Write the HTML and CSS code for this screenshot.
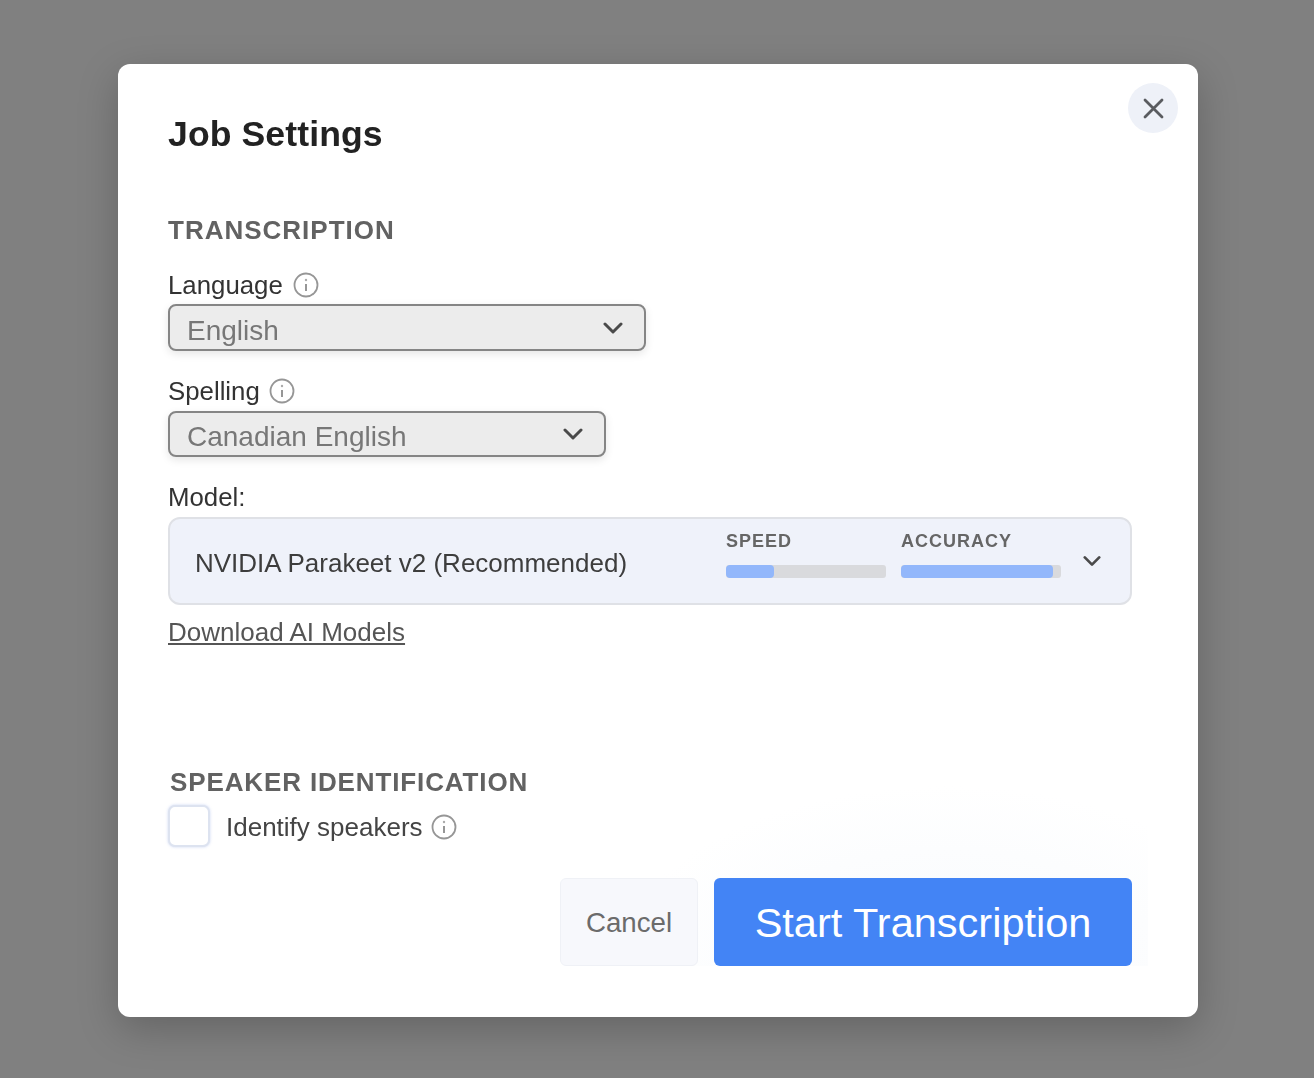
FILE: index.html
```html
<!DOCTYPE html>
<html lang="en">
<head>
<meta charset="utf-8">
<title>Job Settings</title>
<link rel="stylesheet" href="styles.css">
</head>
<body>
<div class="modal">
  <button class="close" aria-label="Close">
    <svg width="24" height="24" viewBox="-1 -1 24 24" fill="none" stroke="#5a5c60" stroke-width="2.8" stroke-linecap="round"><path d="M3 3 20 20M20 3 3 20"/></svg>
  </button>
  <h1 class="title">Job Settings</h1>
  <h2 class="section">TRANSCRIPTION</h2>
  <div class="label">Language
    <svg class="info" viewBox="0 0 26 26" fill="none" stroke="#969696"><circle cx="13" cy="13" r="11.5" stroke-width="1.8"/><path d="M13 12v7" stroke-width="2"/><circle cx="13" cy="8" r="1.2" fill="#aaa" stroke="none"/></svg>
  </div>
  <div class="select lang"><span class="select-value">English</span>
    <svg class="chev" viewBox="0 0 20 12" fill="none" stroke="#4a4a4a" stroke-width="3" stroke-linecap="round" stroke-linejoin="round"><path d="M2 2 10 10 18 2"/></svg>
  </div>
  <div class="label spelling">Spelling
    <svg class="info" viewBox="0 0 26 26" fill="none" stroke="#969696"><circle cx="13" cy="13" r="11.5" stroke-width="1.8"/><path d="M13 12v7" stroke-width="2"/><circle cx="13" cy="8" r="1.2" fill="#aaa" stroke="none"/></svg>
  </div>
  <div class="select spell"><span class="select-value">Canadian English</span>
    <svg class="chev" viewBox="0 0 20 12" fill="none" stroke="#4a4a4a" stroke-width="3" stroke-linecap="round" stroke-linejoin="round"><path d="M2 2 10 10 18 2"/></svg>
  </div>
  <div class="label model-label">Model:</div>
  <div class="model">
    <span class="model-name">NVIDIA Parakeet v2 (Recommended)</span>
    <div class="metric speed">
      <span class="metric-name">SPEED</span>
      <div class="track"><div class="fill" style="width:30%"></div></div>
    </div>
    <div class="metric">
      <span class="metric-name">ACCURACY</span>
      <div class="track"><div class="fill" style="width:95%"></div></div>
    </div>
    <svg class="chev model-chev" viewBox="0 0 20 12" fill="none" stroke="#4a4a4a" stroke-width="3" stroke-linecap="round" stroke-linejoin="round"><path d="M2 2 10 10 18 2"/></svg>
  </div>
  <a class="download" href="#">Download AI Models</a>
  <h2 class="section speaker">SPEAKER IDENTIFICATION</h2>
  <div class="identify">
    <span class="checkbox"></span>
    <span class="identify-text">Identify speakers</span>
    <svg class="info" viewBox="0 0 26 26" fill="none" stroke="#969696"><circle cx="13" cy="13" r="11.5" stroke-width="1.8"/><path d="M13 12v7" stroke-width="2"/><circle cx="13" cy="8" r="1.2" fill="#aaa" stroke="none"/></svg>
  </div>
  <div class="actions">
    <button class="cancel">Cancel</button>
    <button class="start">Start Transcription</button>
  </div>
</div>
</body>
</html>
```
FILE: styles.css
```css
* { box-sizing: border-box; }
html, body { margin: 0; height: 100%; }
body {
  background: #808080;
  padding: 64px 116px 0 118px;
  font-family: "Liberation Sans", Arial, sans-serif;
  overflow: hidden;
}
.modal {
  position: relative;
  width: 1080px;
  height: 953px;
  background: #fff;
  border-radius: 12px;
  padding: 50px 66px 0 50px;
  box-shadow: 0 12px 40px rgba(0, 0, 0, 0.22);
  filter: blur(0.45px);
}
.close {
  position: absolute;
  top: 19px;
  right: 20px;
  width: 50px;
  height: 50px;
  border: 0;
  border-radius: 50%;
  background: #eef1f8;
  display: flex;
  align-items: center;
  justify-content: center;
  padding: 0;
}
.title {
  margin: 0;
  font-size: 35.6px;
  line-height: 40px;
  font-weight: 700;
  color: #222;
  letter-spacing: 0.1px;
}
.section {
  margin: 60px 0 0;
  font-size: 26px;
  line-height: 32px;
  font-weight: 700;
  letter-spacing: 1px;
  color: #626262;
}
.label {
  display: flex;
  align-items: center;
  gap: 10px;
  margin-top: 23px;
  height: 32px;
  font-size: 25.8px;
  color: #333;
}
.label.spelling { margin-top: 24px; gap: 9px; }
.label.model-label { margin-top: 24px; gap: 0; }
.info { width: 26px; height: 26px; flex: none; }
.select {
  margin-top: 3px;
  height: 47px;
  display: flex;
  align-items: center;
  justify-content: space-between;
  background: #ececec;
  border: 2px solid #858585;
  border-radius: 8px;
  padding: 0 21px 0 17px;
  font-size: 28px;
  color: #777;
  box-shadow: 0 3px 8px rgba(0, 0, 0, 0.1);
}
.select-value { padding-top: 6px; }
.select.lang { width: 478px; }
.select.spell { width: 438px; height: 46px; margin-top: 4px; }
.chev { width: 20px; height: 12px; flex: none; }
.model {
  margin-top: 4px;
  height: 88px;
  display: flex;
  align-items: center;
  background: #eff2fa;
  border: 2px solid #dfe1e6;
  border-radius: 12px;
  padding: 0 27px 0 25px;
}
.model-name {
  width: 531px;
  padding-top: 4px;
  font-size: 26px;
  color: #3d3d3d;
}
.metric {
  width: 160px;
  display: flex;
  flex-direction: column;
}
.metric.speed { margin-right: 15px; }
.metric-name {
  font-size: 18px;
  line-height: 22px;
  font-weight: 700;
  letter-spacing: 1px;
  color: #666;
  margin-bottom: 13px;
}
.track {
  height: 13px;
  background: #d9dadd;
  border-radius: 3px;
  overflow: hidden;
  margin-bottom: 14px;
}
.fill {
  height: 100%;
  background: #92b7fb;
  border-radius: 4px;
}
.model-chev { margin-left: 22px; width: 18px; }
.download {
  display: block;
  width: max-content;
  margin-top: 11px;
  font-size: 26px;
  line-height: 32px;
  color: #555;
  text-decoration: underline;
}
.section.speaker { margin: 118px 0 0 2px; letter-spacing: 0.87px; }
.identify {
  display: flex;
  align-items: center;
  height: 42px;
  margin-top: 8px;
  font-size: 26px;
  color: #444;
}
.checkbox {
  width: 42px;
  height: 42px;
  margin: -3px 16px 0 0;
  background: #fff;
  border: 2px solid #dde3f0;
  border-radius: 7px;
  box-shadow: 0 0 3px rgba(110, 140, 220, 0.35);
}
.identify-text { margin-right: 8px; }
.actions {
  position: relative;
  margin-top: 30px;
  display: flex;
  justify-content: flex-end;
  gap: 16px;
}
.actions::before {
  content: "";
  position: absolute;
  right: -16px;
  bottom: 0;
  width: 530px;
  height: 180px;
  background: radial-gradient(ellipse 62% 100% at 62% 100%, #f8fafd 0%, #fcfdfe 65%, #fff 100%);
}
.cancel, .start {
  position: relative;
  height: 88px;
  border: 0;
  padding-top: 2px;
  font-family: inherit;
  border-radius: 6px;
}
.cancel {
  width: 138px;
  background: #f7f8fc;
  border: 1px solid #eff1f6;
  font-size: 27.7px;
  color: #6b6b6b;
}
.start {
  width: 418px;
  background: #4384f5;
  color: #fff;
  font-size: 41.5px;
}
```
